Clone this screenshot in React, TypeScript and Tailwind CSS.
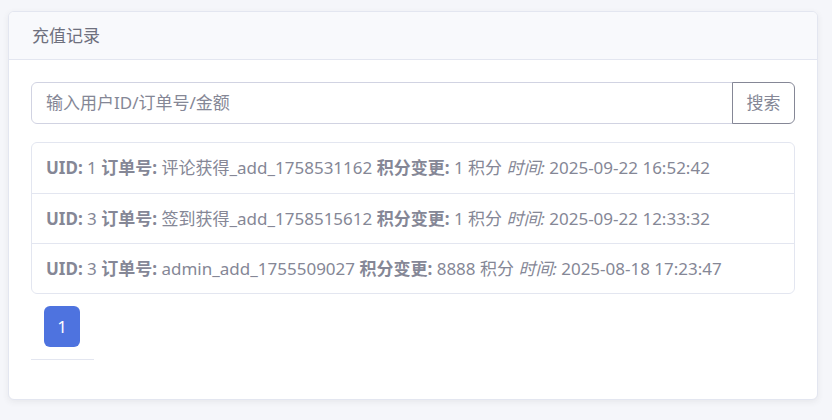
import React from "react";

const rows = [
  { uid: "1", order: "评论获得_add_1758531162", pts: "1", time: "2025-09-22 16:52:42" },
  { uid: "3", order: "签到获得_add_1758515612", pts: "1", time: "2025-09-22 12:33:32" },
  { uid: "3", order: "admin_add_1755509027", pts: "8888", time: "2025-08-18 17:23:47" },
];

export default function App() {
  return (
    <div
      className="w-[832px] h-[420px] bg-[#f5f6fa] pt-[11px] pl-[8px] text-[#858796]"
      style={{ fontFamily: '"Noto Sans", "Noto Sans CJK SC", sans-serif' }}
    >
      <div className="w-[810px] h-[389px] bg-white border border-[#e3e6f0] rounded-[6px] shadow-[0_2px_6px_rgba(58,59,69,0.08)] overflow-hidden">
        <div className="h-[48px] bg-[#f8f9fc] border-b border-[#e3e6f0] flex items-center pl-[23px] text-[17px] text-[#6e707e]">
          充值记录
        </div>
        <div className="px-[22px] pt-[22px]">
          <div className="flex h-[42px]">
            <div className="flex-1 border border-[#d1d3e2] rounded-l-[6px] flex items-center pl-[14px] text-[17px] text-[#858796]">
              输入用户ID/订单号/金额
            </div>
            <div className="w-[63px] border border-[#858796] rounded-r-[6px] -ml-px flex items-center justify-center text-[17px] text-[#858796]">
              搜索
            </div>
          </div>
          <div className="mt-[18px] border border-[#e3e6f0] rounded-[6px]">
            {rows.map((r, i) => (
              <div
                key={i}
                className={`h-[50px] flex items-center pl-[14px] text-[17px] text-[#858796] whitespace-pre ${i > 0 ? "border-t border-[#e3e6f0]" : ""}`}
              >
                <span>
                  <b className="font-bold">UID:</b> {r.uid} <b className="font-bold">订单号:</b> {r.order}{" "}
                  <b className="font-bold">积分变更:</b> {r.pts} 积分 <i>时间:</i> {r.time}
                </span>
              </div>
            ))}
          </div>
          <div className="w-[63px] border-b border-[#e3e6f0] pt-[12px] pb-[12px]">
            <div className="ml-[13px] w-[36px] h-[41px] rounded-[6px] bg-[#4e73df] text-white flex items-center justify-center text-[17px]">
              1
            </div>
          </div>
        </div>
      </div>
    </div>
  );
}
